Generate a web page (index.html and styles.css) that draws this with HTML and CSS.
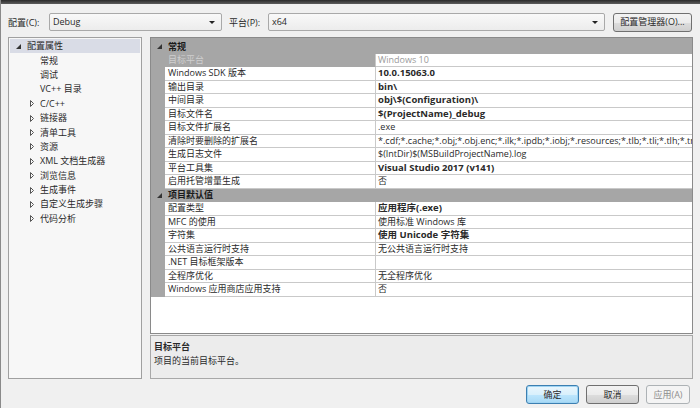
FILE: index.html
```html
<html>
<head>
<meta charset="utf-8">
<link rel="stylesheet" href="styles.css">
</head>
<body>
<div class="titlebar"></div>
<div class="dialog">
  <div class="configbar">
    <span class="lbl lbl-config">配置(C):</span>
    <div class="combo combo-config"><span>Debug</span><i class="arrow"></i></div>
    <span class="lbl lbl-platform">平台(P):</span>
    <div class="combo combo-platform"><span>x64</span><i class="arrow"></i></div>
    <button class="btn btn-manager">配置管理器(O)...</button>
  </div>

  <div class="main">
    <div class="tree">
      <div class="node lvl0 selected"><span class="tw"><svg class="exp" width="5" height="5"><polygon points="5,0 5,5 0,5" fill="#333"/></svg></span><span>配置属性</span></div>
      <div class="node lvl1"><span class="tw"></span><span>常规</span></div>
      <div class="node lvl1"><span class="tw"></span><span>调试</span></div>
      <div class="node lvl1"><span class="tw"></span><span>VC++ 目录</span></div>
      <div class="node lvl1"><span class="tw"><svg class="col" width="4" height="7"><polygon points="0.5,0.5 3.5,3.5 0.5,6.5" fill="none" stroke="#555"/></svg></span><span>C/C++</span></div>
      <div class="node lvl1"><span class="tw"><svg class="col" width="4" height="7"><polygon points="0.5,0.5 3.5,3.5 0.5,6.5" fill="none" stroke="#555"/></svg></span><span>链接器</span></div>
      <div class="node lvl1"><span class="tw"><svg class="col" width="4" height="7"><polygon points="0.5,0.5 3.5,3.5 0.5,6.5" fill="none" stroke="#555"/></svg></span><span>清单工具</span></div>
      <div class="node lvl1"><span class="tw"><svg class="col" width="4" height="7"><polygon points="0.5,0.5 3.5,3.5 0.5,6.5" fill="none" stroke="#555"/></svg></span><span>资源</span></div>
      <div class="node lvl1"><span class="tw"><svg class="col" width="4" height="7"><polygon points="0.5,0.5 3.5,3.5 0.5,6.5" fill="none" stroke="#555"/></svg></span><span>XML 文档生成器</span></div>
      <div class="node lvl1"><span class="tw"><svg class="col" width="4" height="7"><polygon points="0.5,0.5 3.5,3.5 0.5,6.5" fill="none" stroke="#555"/></svg></span><span>浏览信息</span></div>
      <div class="node lvl1"><span class="tw"><svg class="col" width="4" height="7"><polygon points="0.5,0.5 3.5,3.5 0.5,6.5" fill="none" stroke="#555"/></svg></span><span>生成事件</span></div>
      <div class="node lvl1"><span class="tw"><svg class="col" width="4" height="7"><polygon points="0.5,0.5 3.5,3.5 0.5,6.5" fill="none" stroke="#555"/></svg></span><span>自定义生成步骤</span></div>
      <div class="node lvl1"><span class="tw"><svg class="col" width="4" height="7"><polygon points="0.5,0.5 3.5,3.5 0.5,6.5" fill="none" stroke="#555"/></svg></span><span>代码分析</span></div>
    </div>

    <div class="rightcol">
      <div class="grid">
        <div class="prop cat first"><span class="gut"><svg width="5" height="5"><polygon points="5,0 5,5 0,5" fill="#333"/></svg></span><span class="catname">常规</span></div>
        <div class="prop sel"><span class="gut"></span><span class="name">目标平台</span><span class="val dim">Windows 10</span></div>
        <div class="prop"><span class="gut"></span><span class="name">Windows SDK 版本</span><span class="val b">10.0.15063.0</span></div>
        <div class="prop"><span class="gut"></span><span class="name">输出目录</span><span class="val b">bin\</span></div>
        <div class="prop"><span class="gut"></span><span class="name">中间目录</span><span class="val b">obj\$(Configuration)\</span></div>
        <div class="prop"><span class="gut"></span><span class="name">目标文件名</span><span class="val b">$(ProjectName)_debug</span></div>
        <div class="prop"><span class="gut"></span><span class="name">目标文件扩展名</span><span class="val">.exe</span></div>
        <div class="prop"><span class="gut"></span><span class="name">清除时要删除的扩展名</span><span class="val">*.cdf;*.cache;*.obj;*.obj.enc;*.ilk;*.ipdb;*.iobj;*.resources;*.tlb;*.tli;*.tlh;*.tmp;*.rsp;*.pgc;*.pgd;*.meta;*.tlog</span></div>
        <div class="prop"><span class="gut"></span><span class="name">生成日志文件</span><span class="val">$(IntDir)$(MSBuildProjectName).log</span></div>
        <div class="prop"><span class="gut"></span><span class="name">平台工具集</span><span class="val b">Visual Studio 2017 (v141)</span></div>
        <div class="prop"><span class="gut"></span><span class="name">启用托管增量生成</span><span class="val">否</span></div>
        <div class="prop cat"><span class="gut"><svg width="5" height="5"><polygon points="5,0 5,5 0,5" fill="#333"/></svg></span><span class="catname">项目默认值</span></div>
        <div class="prop"><span class="gut"></span><span class="name">配置类型</span><span class="val b">应用程序(.exe)</span></div>
        <div class="prop"><span class="gut"></span><span class="name">MFC 的使用</span><span class="val">使用标准 Windows 库</span></div>
        <div class="prop"><span class="gut"></span><span class="name">字符集</span><span class="val b">使用 Unicode 字符集</span></div>
        <div class="prop"><span class="gut"></span><span class="name">公共语言运行时支持</span><span class="val">无公共语言运行时支持</span></div>
        <div class="prop"><span class="gut"></span><span class="name">.NET 目标框架版本</span><span class="val"></span></div>
        <div class="prop"><span class="gut"></span><span class="name">全程序优化</span><span class="val">无全程序优化</span></div>
        <div class="prop"><span class="gut"></span><span class="name">Windows 应用商店应用支持</span><span class="val">否</span></div>
      </div>
      <div class="desc">
        <div class="desc-title">目标平台</div>
        <div>项目的当前目标平台。</div>
      </div>
    </div>
  </div>

  <div class="footer">
    <button class="btn btn-ok">确定</button>
    <button class="btn btn-cancel">取消</button>
    <button class="btn btn-apply">应用(A)</button>
  </div>
</div>
</body>
</html>
```

FILE: styles.css
```css
body {
  margin: 0;
  background: #f0f0f0;
  font-family: "Open Sans", "Noto Sans CJK SC", sans-serif;
  font-size: 9px;
  color: #2a2a2a;
  border-left: 1px solid #8a8a8a;
  height: 408px;
  box-sizing: border-box;
}

.titlebar {
  height: 4px;
  background: linear-gradient(#2a2a2a, #5c5c5c);
}

.dialog {
  padding: 0 7px 0 7px;
}

/* top bar */
.configbar {
  display: flex;
  align-items: center;
  padding: 9px 0 6px;
  height: 18px;
}

.lbl { white-space: nowrap; }
.lbl-config { width: 41px; }
.lbl-platform { width: 39px; margin-left: 7px; }

.combo {
  position: relative;
  height: 18px;
  box-sizing: border-box;
  border: 1px solid #a9a9a9;
  border-radius: 2px;
  background: linear-gradient(#f9f9f9, #ececec);
  line-height: 16px;
  padding-left: 3px;
}
.combo-config { width: 173px; }
.combo-platform { width: 337px; }

.combo .arrow {
  position: absolute;
  right: 6px;
  top: 7px;
  width: 0;
  height: 0;
  border-left: 3px solid transparent;
  border-right: 3px solid transparent;
  border-top: 3px solid #222;
}

.btn {
  height: 19px;
  box-sizing: border-box;
  border: 1px solid #707070;
  border-radius: 3px;
  background: linear-gradient(#f3f3f3 0%, #ebebeb 50%, #dddddd 51%, #cfcfcf 100%);
  font-family: inherit;
  font-size: 9px;
  color: #2a2a2a;
  padding: 0;
  line-height: 16px;
  white-space: nowrap;
  overflow: hidden;
}
.btn-manager { width: 79px; margin-left: 8px; }

/* main area */
.main {
  display: flex;
  gap: 8px;
  height: 342px;
}

.tree {
  width: 134px;
  box-sizing: border-box;
  border: 1px solid #a0a0a0;
  background: #f7f7f7;
  padding-top: 1px;
}

.node {
  display: flex;
  align-items: center;
  height: 14.4px;
  line-height: 14px;
  margin: 0 1px;
  white-space: nowrap;
}
.node.selected { background: #d9dce6; }
.node.lvl0 { padding-left: 4px; }
.node.lvl1 { padding-left: 17px; }

.tw {
  width: 13px;
  display: flex;
  align-items: center;
}
.tw .exp { margin-left: 2px; }
.tw .col { margin-left: 3px; }

.rightcol {
  width: 543px;
  display: flex;
  flex-direction: column;
  gap: 1px;
}

/* property grid */
.grid {
  flex: 1;
  border: 1px solid #8a8a8a;
  background: #fff;
}

.prop {
  display: flex;
  height: 13.5px;
  line-height: 12.5px;
  white-space: nowrap;
}

.gut {
  width: 14px;
  flex: none;
  background: #a6a6a6;
  display: flex;
  align-items: center;
  justify-content: center;
}

.name {
  width: 211px;
  flex: none;
  box-sizing: border-box;
  padding-left: 3px;
  border-right: 1px solid #c9c9c9;
  border-bottom: 1px solid #c9c9c9;
  overflow: hidden;
}

.val {
  flex: 1;
  box-sizing: border-box;
  padding-left: 2px;
  border-bottom: 1px solid #c9c9c9;
  overflow: hidden;
}
.val.b { font-weight: bold; font-size: 9.5px; }
.val.dim { color: #9a9a9a; }

.prop.sel .name {
  background: #a6a6a6;
  color: #cfcfcf;
  border-bottom-color: #a6a6a6;
}

.prop.cat {
  background: #a6a6a6;
  font-weight: bold;
  color: #1a1a1a;
}
.prop.cat .gut { justify-content: flex-end; padding-right: 3px; box-sizing: border-box; }
.prop.cat.first { height: 15.5px; align-items: flex-end; }
.prop.cat.first .gut { align-self: stretch; align-items: flex-end; padding-bottom: 5px; }
.catname { padding-left: 3px; }

/* description */
.desc {
  height: 44px;
  box-sizing: border-box;
  border: 1px solid #a8a8a8;
  background: #ececec;
  padding: 4px 3px;
  line-height: 14px;
}
.desc-title { font-weight: bold; }

/* dialog buttons */
.footer {
  display: flex;
  justify-content: flex-end;
  gap: 7px;
  padding: 6px 3px 0 0;
}
.btn-ok, .btn-cancel { width: 53px; }
.btn-apply { width: 44px; }

.btn-ok {
  border-color: #3c7fb1;
  background: linear-gradient(#eaf6fd 0%, #d9f0fc 50%, #bee6fd 51%, #a7d9f5 100%);
  box-shadow: inset 0 0 0 1px #9fd4f3;
}

.btn-apply {
  border-color: #adb2b5;
  background: #f4f4f4;
  color: #8d8d8d;
}
```
